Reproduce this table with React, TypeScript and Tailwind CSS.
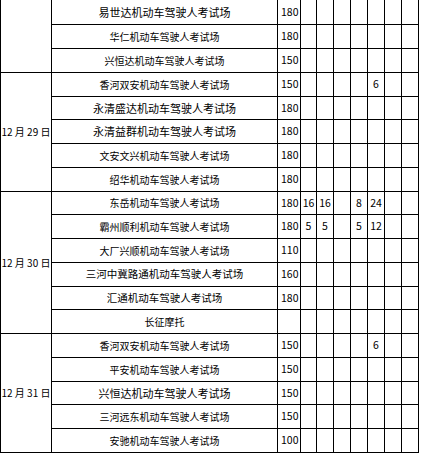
import { Fragment } from "react";

type Row = {
  name: string;
  size: string;
  seats: string;
  counts: string[];
};

const rows: Row[] = [
  { name: "易世达机动车驾驶人考试场", size: "text-[11px]", seats: "180", counts: [] },
  { name: "华仁机动车驾驶人考试场", size: "text-[10px]", seats: "180", counts: [] },
  { name: "兴恒达机动车驾驶人考试场", size: "text-[10px]", seats: "150", counts: [] },
  { name: "香河双安机动车驾驶人考试场", size: "text-[10px]", seats: "150", counts: ["", "", "", "", "6"] },
  { name: "永清盛达机动车驾驶人考试场", size: "text-[11px]", seats: "180", counts: [] },
  { name: "永清益群机动车驾驶人考试场", size: "text-[11px]", seats: "180", counts: [] },
  { name: "文安文兴机动车驾驶人考试场", size: "text-[10px]", seats: "180", counts: [] },
  { name: "绍华机动车驾驶人考试场", size: "text-[10px]", seats: "180", counts: [] },
  { name: "东岳机动车驾驶人考试场", size: "text-[10px]", seats: "180", counts: ["16", "16", "", "8", "24"] },
  { name: "霸州顺利机动车驾驶人考试场", size: "text-[10px]", seats: "180", counts: ["5", "5", "", "5", "12"] },
  { name: "大厂兴顺机动车驾驶人考试场", size: "text-[10px]", seats: "110", counts: [] },
  { name: "三河中冀路通机动车驾驶人考试场", size: "text-[10.5px]", seats: "160", counts: [] },
  { name: "汇通机动车驾驶人考试场", size: "text-[10.5px]", seats: "180", counts: [] },
  { name: "长征摩托", size: "text-[10px]", seats: "", counts: [] },
  { name: "香河双安机动车驾驶人考试场", size: "text-[10px]", seats: "150", counts: ["", "", "", "", "6"] },
  { name: "平安机动车驾驶人考试场", size: "text-[10px]", seats: "150", counts: [] },
  { name: "兴恒达机动车驾驶人考试场", size: "text-[11px]", seats: "150", counts: [] },
  { name: "三河远东机动车驾驶人考试场", size: "text-[10px]", seats: "150", counts: [] },
  { name: "安驰机动车驾驶人考试场", size: "text-[10px]", seats: "100", counts: [] },
];

// date cells keyed by the row they start on
const dates: Record<number, { label: string; span: string }> = {
  0: { label: "", span: "row-span-3" },
  3: { label: "12 月 29 日", span: "row-span-5" },
  8: { label: "12 月 30 日", span: "row-span-6" },
  14: { label: "12 月 31 日", span: "row-span-5" },
};

const cols = [0, 1, 2, 3, 4, 5, 6];

export default function App() {
  return (
    <div
      className="min-h-[455px] w-[421px] bg-white text-black"
      style={{ fontFamily: '"Noto Sans CJK SC", "Noto Sans", sans-serif' }}
    >
      <div className="grid w-[419px] grid-cols-[50px_225px_22px_15px_16px_16px_16px_16px_16px_16px] grid-rows-[24px_23px_23px_23px_22px_23px_23px_23px_22px_23px_23px_23px_22px_23px_23px_23px_22px_23px_23px] gap-px bg-black pb-px pl-px pr-px">
        {rows.map((row, i) => (
          <Fragment key={i}>
            {dates[i] && (
              <div
                className={`${dates[i].span} flex items-center justify-center bg-white text-[10px] leading-none whitespace-nowrap`}
              >
                {dates[i].label}
              </div>
            )}
            <div
              className={`${row.size} flex items-center justify-center bg-white leading-none whitespace-nowrap`}
            >
              {row.name}
            </div>
            <div className="flex items-center bg-white pl-[3px] text-[10.5px] leading-none">
              {row.seats}
            </div>
            {cols.map((c) => (
              <div
                key={c}
                className="flex items-center justify-center bg-white text-[10.5px] leading-none"
              >
                {row.counts[c] ?? ""}
              </div>
            ))}
          </Fragment>
        ))}
      </div>
    </div>
  );
}
